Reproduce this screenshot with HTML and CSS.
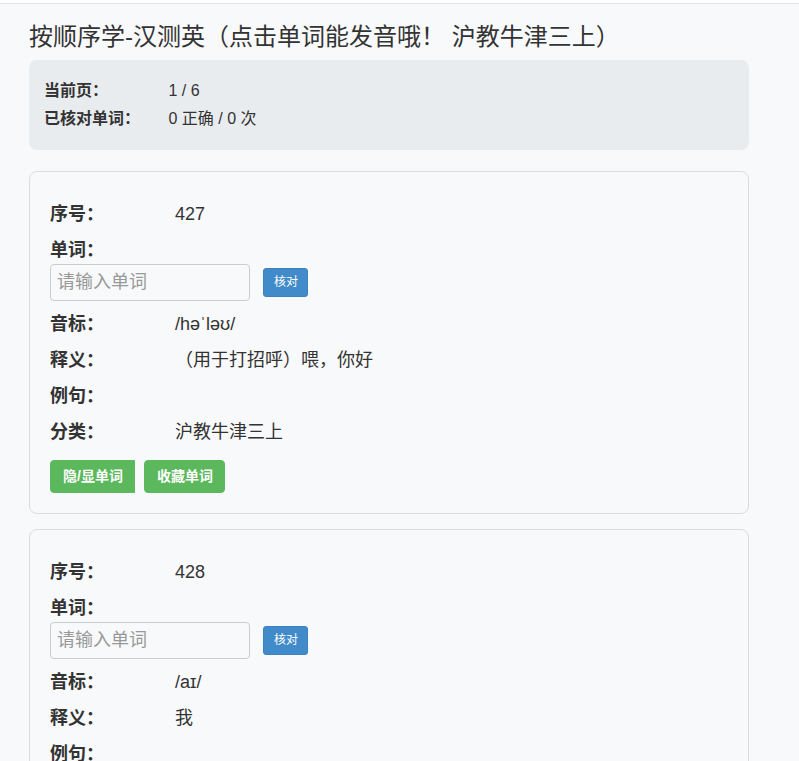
FILE: index.html
```html
<!DOCTYPE html>
<html lang="zh-CN">
<head>
    <meta charset="UTF-8">
    <meta name="viewport" content="width=device-width, initial-scale=1.0">
    <title>按顺序学-汉测英</title>
    <link rel="stylesheet" href="styles.css">
</head>
<body>
    <div class="topbar"></div>
    <div class="container">
        <h1>按顺序学-汉测英（点击单词能发音哦！ 沪教牛津三上）</h1>
        <div class="stats">
            <div class="stat-row"><span class="label">当前页：</span> <span id="page-info">1 / 6</span></div>
            <div class="stat-row"><span class="label">已核对单词：</span> <span id="check-info">0 正确 / 0 次</span></div>
        </div>
        <div id="word-list"></div>
    </div>
    <script>
        const words = [
            [427, 'hello', '/həˈləʊ/', '（用于打招呼）喂，你好'],
            [428, 'I', '/aɪ/', '我'],
            [429, 'am', '/æm/', '是'],
            [430, 'goodbye', '/ɡʊdˈbaɪ/', '再见'],
            [431, 'hi', '/haɪ/', '你好'],
            [432, 'morning', '/ˈmɔːnɪŋ/', '早晨，上午'],
            [433, 'good', '/ɡʊd/', '好的'],
            [434, 'afternoon', '/ˌɑːftəˈnuːn/', '下午'],
            [435, 'Miss', '/mɪs/', '小姐'],
            [436, 'Mr', '/ˈmɪstə/', '先生'],
            [437, 'Mrs', '/ˈmɪsɪz/', '夫人，太太'],
            [438, 'how', '/haʊ/', '怎样'],
            [439, 'are', '/ɑː/', '是'],
            [440, 'you', '/juː/', '你，你们'],
            [441, 'fine', '/faɪn/', '好的'],
            [442, 'thank', '/θæŋk/', '感谢'],
            [443, 'what', '/wɒt/', '什么'],
            [444, 'your', '/jɔː/', '你的，你们的'],
            [445, 'name', '/neɪm/', '名字'],
            [446, 'my', '/maɪ/', '我的']
        ];

        let correct = 0;
        let total = 0;

        function renderWords() {
            const list = document.getElementById('word-list');
            let html = '';
            for (const w of words) {
                html += `
                <div class="word-card">
                    <div class="row"><span class="label">序号：</span> <span>${w[0]}</span></div>
                    <div class="row">
                        <span class="label">单词：</span>
                        <div class="check-line">
                            <input type="text" class="word-input" id="input-${w[0]}" placeholder="请输入单词">
                            <button class="btn-check" onclick="checkWord(${w[0]}, '${w[1]}')">核对</button>
                        </div>
                    </div>
                    <div class="row"><span class="label">音标：</span> <span>${w[2]}</span></div>
                    <div class="row"><span class="label">释义：</span> <span>${w[3]}</span></div>
                    <div class="row"><span class="label">例句：</span> <span></span></div>
                    <div class="row"><span class="label">分类：</span> <span>沪教牛津三上</span></div>
                    <div class="actions">
                        <button class="btn-green btn-toggle">隐/显单词</button>
                        <button class="btn-green">收藏单词</button>
                    </div>
                </div>`;
            }
            list.innerHTML = html;
        }

        function checkWord(id, answer) {
            const input = document.getElementById('input-' + id);
            total++;
            if (input.value.trim().toLowerCase() === answer.toLowerCase()) {
                correct++;
            }
            document.getElementById('check-info').textContent = `${correct} 正确 / ${total} 次`;
        }

        renderWords();
    </script>
</body>
</html>
```

FILE: styles.css
```css
body {
    font-family: 'Liberation Sans', Arial, 'Noto Sans CJK SC', sans-serif;
    margin: 0;
    padding: 0;
    background-color: #f8f9fa;
    color: #333;
}
.topbar {
    height: 3px;
    background: #fff;
    border-bottom: 1px solid #e3e4e6;
}
.container {
    max-width: 720px;
    padding: 0 29px 30px;
}
h1 {
    font-size: 24px;
    font-weight: normal;
    line-height: 1.2;
    margin: 19px 0 8px;
}
.label {
    display: inline-block;
    width: 120px;
    font-weight: bold;
}
.stats {
    background: #e9ecef;
    border-radius: 8px;
    padding: 19px 15px 20px;
    font-size: 16px;
    line-height: 23px;
    margin-bottom: 21px;
}
.stat-row + .stat-row {
    margin-top: 5px;
}
.word-card {
    border: 1px solid #dcdcdc;
    border-radius: 8px;
    padding: 29px 20px 20px;
    margin-bottom: 15px;
    font-size: 18px;
    line-height: 26px;
}
.row {
    margin-bottom: 10px;
}
.check-line {
    display: flex;
    align-items: center;
    gap: 13px;
    margin-top: 1px;
}
.word-input {
    width: 200px;
    height: 37px;
    box-sizing: border-box;
    padding: 6px;
    border: 1px solid #ccc;
    border-radius: 4px;
    font-size: 18px;
    font-family: inherit;
    background: #f8f9fa;
    color: #333;
}
.word-input::placeholder {
    color: #999;
}
.btn-check {
    padding: 5px 9px 5px 10px;
    font-size: 12px;
    line-height: 17px;
    color: #fff;
    background-color: #428bca;
    border: 1px solid #3d82bf;
    border-radius: 3px;
    font-family: inherit;
    cursor: pointer;
}
.actions {
    display: flex;
    gap: 9px;
    margin-top: 15px;
}
.btn-green {
    padding: 6px 11px 6px 12px;
    font-size: 14px;
    line-height: 19px;
    font-weight: bold;
    color: #fff;
    background-color: #5cb85c;
    border: 1px solid #5cb85c;
    border-radius: 4px;
    font-family: inherit;
    cursor: pointer;
}
.btn-toggle {
    border-radius: 4px 0 0 4px;
}
```
